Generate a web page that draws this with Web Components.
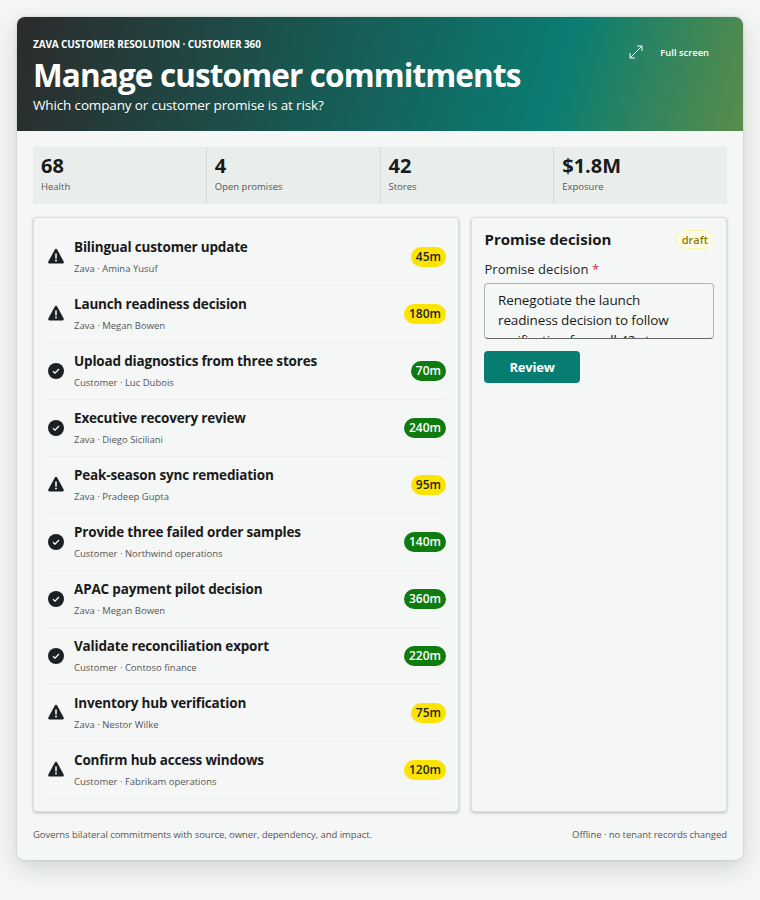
<!DOCTYPE html>
<html><head><meta charset="utf-8"><style>
html,body{margin:0;padding:0;background:#f5f7f6;font-family:"Open Sans","Noto Sans",sans-serif;color:#1a1a1a}
body{padding:17px 17px 40px;box-sizing:border-box;height:900px;overflow:hidden}
</style></head><body>
<z-shell>
<z-header slot="header" eyebrow="ZAVA CUSTOMER RESOLUTION · CUSTOMER 360" heading="Manage customer commitments" sub="Which company or customer promise is at risk?"></z-header>
<z-metrics slot="metrics">
<z-metric value="68" label="Health"></z-metric>
<z-metric value="4" label="Open promises"></z-metric>
<z-metric value="42" label="Stores"></z-metric>
<z-metric value="$1.8M" label="Exposure"></z-metric>
</z-metrics>
<z-panel slot="list" class="list">
<z-row kind="warn" title="Bilingual customer update" meta="Zava · Amina Yusuf" time="45m"></z-row>
<z-row kind="warn" title="Launch readiness decision" meta="Zava · Megan Bowen" time="180m"></z-row>
<z-row kind="ok" title="Upload diagnostics from three stores" meta="Customer · Luc Dubois" time="70m"></z-row>
<z-row kind="ok" title="Executive recovery review" meta="Zava · Diego Siciliani" time="240m"></z-row>
<z-row kind="warn" title="Peak-season sync remediation" meta="Zava · Pradeep Gupta" time="95m"></z-row>
<z-row kind="ok" title="Provide three failed order samples" meta="Customer · Northwind operations" time="140m"></z-row>
<z-row kind="ok" title="APAC payment pilot decision" meta="Zava · Megan Bowen" time="360m"></z-row>
<z-row kind="ok" title="Validate reconciliation export" meta="Customer · Contoso finance" time="220m"></z-row>
<z-row kind="warn" title="Inventory hub verification" meta="Zava · Nestor Wilke" time="75m"></z-row>
<z-row kind="warn" title="Confirm hub access windows" meta="Customer · Fabrikam operations" time="120m"></z-row>
</z-panel>
<z-panel slot="side"><z-decision></z-decision></z-panel>
<span slot="foot-l">Governs bilateral commitments with source, owner, dependency, and impact.</span>
<span slot="foot-r">Offline · no tenant records changed</span>
</z-shell>
<script>
function def(name,css,html){
  customElements.define(name,class extends HTMLElement{
    constructor(){super();const r=this.attachShadow({mode:'open'});
      const a=n=>this.getAttribute(n)||'';
      r.innerHTML='<style>'+css+'</style>'+(typeof html==='function'?html(a,this):html);}
  });
}
const FS='"Open Sans","Noto Sans",sans-serif';
def('z-shell',`:host{display:flex;flex-direction:column;width:726px;height:843px;background:#f5f7f6;border-radius:8px;overflow:hidden;box-shadow:0 8px 24px rgba(30,50,45,.18),0 0 3px rgba(30,50,45,.18);font-family:${FS}}
.body{flex:1;display:flex;flex-direction:column;padding:16px 16px 0;min-height:0}
.main{display:grid;grid-template-columns:426px 256px;gap:12px;margin-top:13px;height:595px}
.foot{display:flex;justify-content:space-between;margin-top:16px;font-size:9.500px;line-height:14px;letter-spacing:-.05px;color:#555}`,
`<slot name="header"></slot><div class="body"><slot name="metrics"></slot><div class="main"><slot name="list"></slot><slot name="side"></slot></div><div class="foot"><slot name="foot-l"></slot><slot name="foot-r"></slot></div></div>`);
def('z-header',`:host{display:flex;justify-content:space-between;height:114px;box-sizing:border-box;padding:20px 16px 0;color:#fff;background:linear-gradient(106deg,#2b2b2b 0%,#0a7d72 74%,#5a8c4a 100%)}
.eb{font-size:10px;font-weight:700;line-height:14px;letter-spacing:-.13px}
h1{margin:5px 0 0;font-size:31.500px;line-height:38px;font-weight:700;letter-spacing:-.88px}
.sub{font-size:13.500px;line-height:18px;margin-top:2px;letter-spacing:-.14px}
.fs{display:flex;align-items:center;gap:17px;height:30px;margin:0 18px 0 0;font-size:9.400px;font-weight:600}
svg{display:block}`,
(a)=>`<div><div class="eb">${a('eyebrow')}</div><h1>${a('heading')}</h1><div class="sub">${a('sub')}</div></div>
<div class="fs"><svg width="14" height="14" viewBox="0 0 14 14" fill="none" stroke="#fff" stroke-width="1"><path d="M1 8v5h5M13 6V1H8M1 13L13 1"/></svg><span>Full screen</span></div>`);
def('z-metrics',`:host{display:grid;grid-template-columns:repeat(4,1fr);gap:1px;height:57px;background:#d3dcd9}`,`<slot></slot>`);
def('z-metric',`:host{display:block;padding:7px 8px 0;background:#e9eeec;box-sizing:border-box}
.v{font-size:20px;font-weight:700;line-height:24px;color:#1a1a1a}.l{font-size:9.500px;line-height:14px;color:#555;margin-top:2px}`,
(a)=>`<div class="v">${a('value')}</div><div class="l">${a('label')}</div>`);
def('z-panel',`:host{display:block;box-sizing:border-box;background:#f5f7f6;border:1px solid #d8e0dd;border-radius:4px;padding:11px 12px;box-shadow:0 1px 3px rgba(30,50,45,.3)}`,`<slot></slot>`);
const icons={warn:`<svg width="18" height="18" viewBox="0 1 18 18"><path fill="#1a2024" fill-rule="evenodd" d="M9 1.800c.5 0 .9.250 1.150.7l6.500 12c.5.900-.15 2-1.150 2H2.500c-1 0-1.650-1.100-1.150-2l6.500-12c.25-.45.650-.7 1.150-.7zM8.200 6.500v5h1.600v-5zM9 12.600a1 1 0 1 0 0 2 1 1 0 0 0 0-2z"/></svg>`,
ok:`<svg width="18" height="18" viewBox="0 0 18 18"><circle cx="9" cy="9" r="8" fill="#1a2024"/><path d="M6 9.200l2 1.900 4-4.100" fill="none" stroke="#fff" stroke-width="1.300"/></svg>`};
def('z-row',`:host{display:flex;align-items:center;height:57px;box-sizing:border-box;border-bottom:1px solid #ebefed;padding:0;gap:9px}
svg{display:block}
.t{flex:1;min-width:0}.tt{font-size:13.500px;font-weight:700;line-height:18px;color:#1a1a1a;letter-spacing:-.18px}.m{font-size:9.500px;line-height:14px;color:#555;margin-top:6px}
.ic{margin-left:1px}
.b{font-size:12px;font-weight:600;line-height:20px;height:20px;padding:0 5px;border-radius:10px}
.warn{background:#fde300;color:#242424}.ok{background:#107c10;color:#fff}`,
(a)=>`<div class="ic">${icons[a('kind')]}</div><div class="t"><div class="tt">${a('title')}</div><div class="m">${a('meta')}</div></div><div class="b ${a('kind')}">${a('time')}</div>`);
def('z-decision',`:host{display:block}
.h{display:flex;justify-content:space-between;align-items:center;height:22px;margin-top:-1px}
h2{margin:0 0 0 .5px;font-size:15px;font-weight:700;line-height:20px}
.d{font-size:11px;font-weight:600;color:#8a7a00;background:#fffde8;border:1px solid #fdf3a8;border-radius:10px;padding:0 5px;line-height:17px}
label{display:block;margin-top:10px;margin-left:.5px;font-size:13px;line-height:18px;color:#242424;letter-spacing:.05px}label i{font-style:normal;color:#c4314b}
.ta{margin-top:5px;height:56px;box-sizing:border-box;border:1px solid #a9b8b4;border-bottom-color:#666;border-radius:4px;padding:6px 13px;overflow:hidden;font-size:13.500px;line-height:20px;letter-spacing:-.14px;background:#f5f7f6}
button{display:block;margin-top:12px;width:96px;height:32px;border:0;border-radius:4px;background:#077d72;color:#fff;font:700 13px ${FS};letter-spacing:-.2px}`,
`<div class="h"><h2>Promise decision</h2><span class="d">draft</span></div><label>Promise decision <i>*</i></label><div class="ta">Renegotiate the launch readiness decision to follow verification from all 42 stores.</div><button>Review</button>`);
</script>
</body></html>
